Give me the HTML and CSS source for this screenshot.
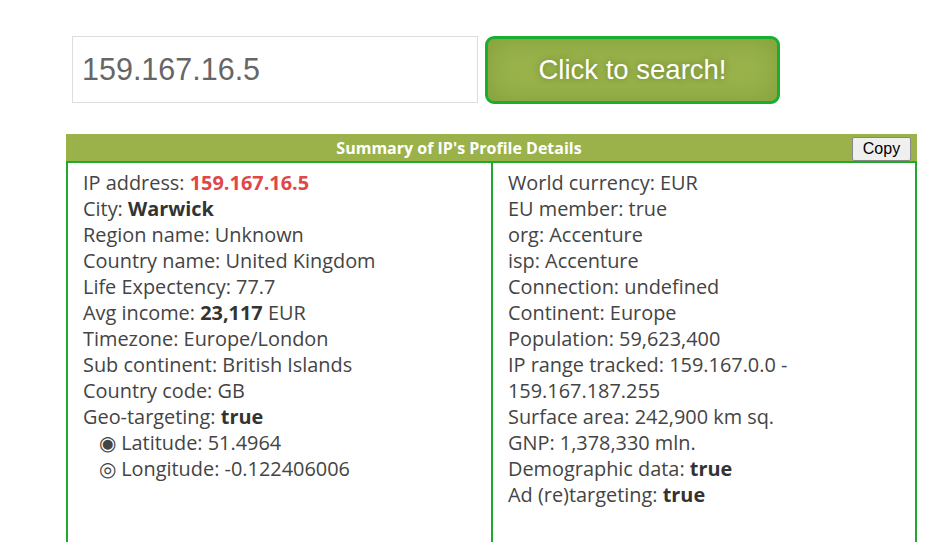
FILE: index.html
```html
<!DOCTYPE html>
<html>
<head>
<meta charset="utf-8">
<link rel="stylesheet" href="styles.css">
</head>
<body>
<div class="search">
  <input class="ip-input" type="text" value="159.167.16.5">
  <button class="search-btn">Click to search!</button>
</div>
<div class="summary">
  <div class="summary-head">
    <span class="summary-title">Summary of IP's Profile Details</span>
    <button class="copy-btn">Copy</button>
  </div>
  <div class="summary-body">
    <div class="col">
      <div>IP address: <b class="ip">159.167.16.5</b></div>
      <div>City: <b>Warwick</b></div>
      <div>Region name: Unknown</div>
      <div>Country name: United Kingdom</div>
      <div>Life Expectency: 77.7</div>
      <div>Avg income: <b>23,117</b> EUR</div>
      <div>Timezone: Europe/London</div>
      <div>Sub continent: British Islands</div>
      <div>Country code: GB</div>
      <div>Geo-targeting: <b>true</b></div>
      <div class="sub">◉ Latitude: 51.4964</div>
      <div class="sub">◎ Longitude: -0.122406006</div>
    </div>
    <div class="col col-right">
      <div>World currency: EUR</div>
      <div>EU member: true</div>
      <div>org: Accenture</div>
      <div>isp: Accenture</div>
      <div>Connection: undefined</div>
      <div>Continent: Europe</div>
      <div>Population: 59,623,400</div>
      <div>IP range tracked: 159.167.0.0 - 159.167.187.255</div>
      <div>Surface area: 242,900 km sq.</div>
      <div>GNP: 1,378,330 mln.</div>
      <div>Demographic data: <b>true</b></div>
      <div>Ad (re)targeting: <b>true</b></div>
    </div>
  </div>
</div>
</body>
</html>
```
FILE: styles.css
```css
html, body {
  margin: 0;
  padding: 0;
  background: #fff;
}
body {
  font-family: "Open Sans", "Liberation Sans", sans-serif;
}
.search {
  display: flex;
  gap: 7px;
  padding: 36px 0 0 72px;
  height: 67px;
}
.ip-input {
  box-sizing: border-box;
  width: 406px;
  height: 67px;
  border: 1px solid #ddd;
  padding: 0 9px;
  font-family: "Liberation Sans", Arial, sans-serif;
  font-size: 30.5px;
  color: #666;
  outline: none;
  margin: 0;
}
.search-btn {
  box-sizing: border-box;
  width: 295px;
  height: 68px;
  margin: 0;
  border: 3px solid #1aae2e;
  border-radius: 9px;
  background: #9ab34b;
  box-shadow: inset 0 0 28px rgba(110, 140, 50, 0.55);
  color: #fff;
  font-family: "Liberation Sans", Arial, sans-serif;
  font-size: 27.5px;
  text-shadow: 0 0 6px rgba(60, 80, 20, 0.5);
  padding: 0;
}
.summary {
  margin: 31px 0 0 66px;
  width: 851px;
}
.summary-head {
  height: 27px;
  background: #9bb24a;
  display: flex;
  align-items: center;
  padding-right: 6px;
}
.summary-title {
  flex: 1;
  text-align: center;
  color: #fff;
  font-weight: 700;
  font-size: 16px;
}
.copy-btn {
  height: 24px;
  width: 59px;
  box-sizing: border-box;
  border: 1px solid #888;
  border-radius: 2px;
  background: #efefef;
  font-family: "Liberation Sans", Arial, sans-serif;
  font-size: 16px;
  color: #000;
  padding: 0;
  margin-top: 2px;
}
.summary-body {
  display: grid;
  grid-template-columns: 423px 1fr;
  border: 2px solid #1faa2e;
  border-bottom: none;
  height: 400px;
  box-sizing: border-box;
}
.col {
  padding: 7px 0 0 15px;
  font-size: 19.9px;
  line-height: 26px;
  color: #444;
}
.col-right {
  border-left: 2px solid #1faa2e;
  padding-left: 15px;
  padding-right: 110px;
}
.col b {
  font-weight: 700;
  color: #333;
}
.col b.ip {
  color: #e04848;
}
.sub {
  padding-left: 16px;
}
```
